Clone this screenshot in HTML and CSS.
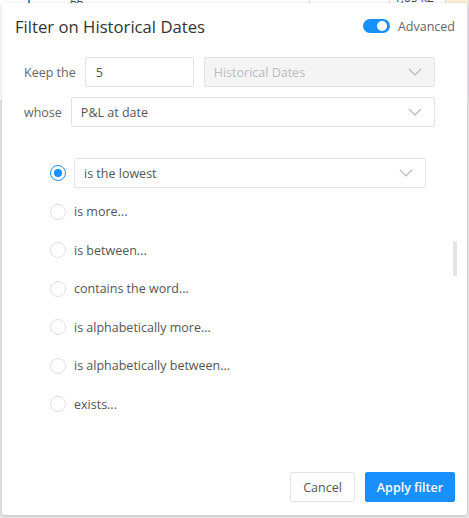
FILE: index.html
```html
<!DOCTYPE html>
<html>
<head>
<meta charset="utf-8">
<link rel="stylesheet" href="styles.css">
</head>
<body>
<div class="backdrop">
  <div class="bg-top">
    <div class="bg-col bg-col-a"></div>
    <div class="bg-col bg-col-b"><span class="bg-text">gg</span></div>
    <div class="bg-col bg-col-c"></div>
    <div class="bg-col bg-col-d"><span class="bg-text bg-num">1,05 k£</span></div>
    <div class="bg-col bg-col-e"></div>
  </div>
</div>
<div class="dialog">
  <div class="header">
    <div class="title">Filter on Historical Dates</div>
    <div class="adv">
      <span class="toggle"><span class="knob"></span></span>
      <span class="adv-label">Advanced</span>
    </div>
  </div>
  <div class="form">
    <div class="row">
      <span class="label">Keep the</span>
      <div class="input num">5</div>
      <div class="select disabled">
        <span>Historical Dates</span>
        <svg class="chev" width="14" height="8" viewBox="0 0 14 8"><path d="M1 1 L7 7 L13 1" fill="none" stroke="currentColor" stroke-width="1.1"/></svg>
      </div>
    </div>
    <div class="row">
      <span class="label">whose</span>
      <div class="select">
        <span>P&amp;L at date</span>
        <svg class="chev" width="14" height="8" viewBox="0 0 14 8"><path d="M1 1 L7 7 L13 1" fill="none" stroke="currentColor" stroke-width="1.1"/></svg>
      </div>
    </div>
  </div>
  <div class="options">
    <div class="list">
      <div class="opt">
        <span class="radio checked"><span class="dot"></span></span>
        <div class="select opt-select">
          <span>is the lowest</span>
          <svg class="chev" width="14" height="8" viewBox="0 0 14 8"><path d="M1 1 L7 7 L13 1" fill="none" stroke="currentColor" stroke-width="1.1"/></svg>
        </div>
      </div>
      <div class="opt"><span class="radio"></span><span class="opt-label">is more...</span></div>
      <div class="opt"><span class="radio"></span><span class="opt-label">is between...</span></div>
      <div class="opt"><span class="radio"></span><span class="opt-label">contains the word...</span></div>
      <div class="opt"><span class="radio"></span><span class="opt-label">is alphabetically more...</span></div>
      <div class="opt"><span class="radio"></span><span class="opt-label">is alphabetically between...</span></div>
      <div class="opt"><span class="radio"></span><span class="opt-label">exists...</span></div>
    </div>
    <div class="scrolltrack"><div class="thumb"></div></div>
  </div>
  <div class="footer">
    <button class="btn">Cancel</button>
    <button class="btn primary">Apply filter</button>
  </div>
</div>
</body>
</html>
```
FILE: styles.css
```css
* { box-sizing: border-box; }
html, body { margin: 0; padding: 0; }
body {
  width: 469px;
  height: 518px;
  overflow: hidden;
  background: #e8e8e8;
  font-family: "Open Sans", "Noto Sans", sans-serif;
  color: #555;
  position: relative;
}
.backdrop { height: 518px; }
.bg-top { display: flex; height: 100px; background: #fff; }
.bg-col { height: 100%; border-right: 1px solid #e0e0e0; position: relative; }
.bg-col-a { width: 30px; border-right: 2px solid #4a8ad8; }
.bg-col-b { width: 280px; }
.bg-col-c { width: 80px; }
.bg-col-d { width: 56px; }
.bg-col-e { flex: 1; background: #fbf0d6; }
.bg-text { font-size: 12px; line-height: 14px; color: #444; position: absolute; top: -9px; left: 40px; }
.bg-num { left: 4px; }

.dialog {
  position: absolute;
  left: 2px;
  top: 3px;
  width: 465px;
  height: 512px;
  background: #fff;
  border-radius: 3px;
  box-shadow: 0 1px 4px rgba(0,0,0,0.18);
  display: flex;
  flex-direction: column;
}
.header {
  display: flex;
  align-items: center;
  justify-content: space-between;
  height: 46px;
  padding: 0 12px 0 13px;
}
.title { font-size: 16.7px; color: #333; padding-top: 1px; }
.adv { display: flex; align-items: center; gap: 8px; }
.toggle {
  width: 27px; height: 14px; border-radius: 7px;
  background: #1890ff; position: relative; display: inline-block;
}
.knob {
  position: absolute; right: 3px; top: 2px;
  width: 10px; height: 10px; border-radius: 50%; background: #fff;
}
.adv-label { font-size: 12.5px; color: #666; }

.form { padding: 8px 32px 0 22px; display: flex; flex-direction: column; gap: 10px; }
.row { display: flex; align-items: center; }
.label { font-size: 12.5px; color: #666; margin-right: 9px; white-space: nowrap; }
.input, .select {
  height: 30px;
  border: 1px solid #e3e3e3;
  border-radius: 2px;
  font-size: 12.5px;
  color: #555;
  display: flex;
  align-items: center;
  padding: 0 10px;
  background: #fff;
}
.input { width: 109px; margin-right: 10px; }
.select { flex: 1; justify-content: space-between; padding: 0 12px 0 9px; }
.select.disabled { background: #f4f4f4; color: #bbb; }
.chev { color: #b5b5b5; }

.options { flex: 1; display: flex; padding: 31px 10px 0 48px; }
.list { flex: 1; display: flex; flex-direction: column; gap: 8.5px; padding-right: 27px; }
.opt { height: 30px; display: flex; align-items: center; }
.radio {
  width: 16px; height: 16px; border-radius: 50%;
  border: 1px solid #e0e0e0; margin-right: 8px; flex: none;
  display: flex; align-items: center; justify-content: center;
}
.radio.checked { border-color: #1890ff; }
.dot { width: 8px; height: 8px; border-radius: 50%; background: #1890ff; }
.opt-label { font-size: 12.5px; color: #555; }
.opt-select { flex: 1; }
.scrolltrack { width: 4px; padding-top: 83px; }
.thumb { width: 4px; height: 35px; background: #e4e4e4; }

.footer { display: flex; justify-content: flex-end; gap: 10px; padding: 0 12px 13px 0; }
.btn {
  height: 30px; border-radius: 2px; font-family: inherit; font-size: 12.5px;
  border: 1px solid #e3e3e3; background: #fff; color: #555; padding: 0 6px;
  white-space: nowrap;
}
.btn:first-child { width: 65px; }
.btn.primary { width: 90px; background: #1890ff; border-color: #1890ff; color: #fff; font-weight: 600; }
```
